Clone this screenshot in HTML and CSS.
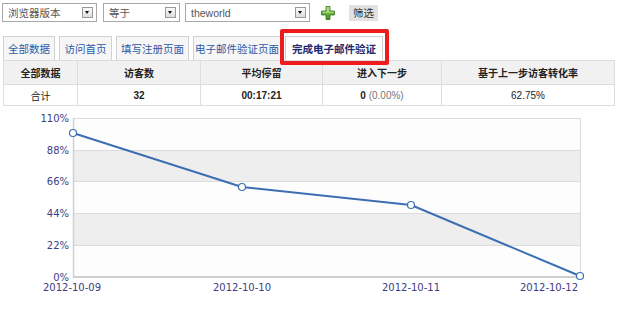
FILE: index.html
```html
<!DOCTYPE html>
<html lang="zh">
<head>
<meta charset="utf-8">
<link rel="stylesheet" href="styles.css">
</head>
<body>
<div class="page">
  <div class="filter">
    <div class="sel sel1"><span>浏览器版本</span><span class="arrow"></span></div>
    <div class="sel sel2"><span>等于</span><span class="arrow"></span></div>
    <div class="sel sel3"><span class="latin">theworld</span><span class="arrow"></span></div>
    <svg class="plus" width="14" height="14" viewBox="0 0 14 14">
      <defs>
        <linearGradient id="pg" x1="0" y1="0" x2="0" y2="1">
          <stop offset="0" stop-color="#9ad36a"/>
          <stop offset="1" stop-color="#3f8f1f"/>
        </linearGradient>
      </defs>
      <path d="M5 0.5h4v4.5h4.5v4h-4.5v4.5h-4v-4.5h-4.5v-4h4.5z" fill="url(#pg)" stroke="#3b7a1c" stroke-width="0.8"/>
      <path d="M5.8 1.4h2.4v4.4h4.4v1.2h-10.7v-1.2h3.9z" fill="#c6ec9e" opacity="0.6"/>
    </svg>
    <div class="btn">筛选</div>
  </div>

  <div class="tabs">
    <div class="tab t1">全部数据</div>
    <div class="tab t2">访问首页</div>
    <div class="tab t3">填写注册页面</div>
    <div class="tab t4">电子邮件验证页面</div>
    <div class="tab t5 active">完成电子邮件验证<span class="mark"></span></div>
  </div>

  <table class="data">
    <tr class="head">
      <th class="c1">全部数据</th>
      <th class="c2">访客数</th>
      <th class="c3">平均停留</th>
      <th class="c4">进入下一步</th>
      <th class="c5">基于上一步访客转化率</th>
    </tr>
    <tr class="row">
      <td>合计</td>
      <td class="num b">32</td>
      <td class="num b">00:17:21</td>
      <td class="num"><b>0</b> <span class="muted">(0.00%)</span></td>
      <td class="num">62.75%</td>
    </tr>
  </table>

  <svg class="chart" width="620" height="205" viewBox="0 107 620 205">
    <rect x="73" y="118" width="507" height="159" fill="#fdfdfd"/>
    <rect x="73" y="150" width="507" height="31" fill="#eeeeee"/>
    <rect x="73" y="213" width="507" height="32" fill="#eeeeee"/>
    <g stroke="#dcdcdc" stroke-width="1">
      <line x1="73" y1="118.5" x2="580" y2="118.5"/>
      <line x1="73" y1="150.5" x2="580" y2="150.5"/>
      <line x1="73" y1="181.5" x2="580" y2="181.5"/>
      <line x1="73" y1="213.5" x2="580" y2="213.5"/>
      <line x1="73" y1="245.5" x2="580" y2="245.5"/>
      <line x1="580.5" y1="118" x2="580.5" y2="277"/>
    </g>
    <line x1="73" y1="277" x2="581" y2="277" stroke="#d0d0d0" stroke-width="2"/>
    <line x1="73.5" y1="118" x2="73.5" y2="278" stroke="#d0d0d0" stroke-width="1.5"/>
    <g class="ylab" text-anchor="end">
      <text x="69" y="122">110%</text>
      <text x="69" y="154">88%</text>
      <text x="69" y="185">66%</text>
      <text x="69" y="217">44%</text>
      <text x="69" y="249">22%</text>
      <text x="69" y="281">0%</text>
    </g>
    <g class="ylab" text-anchor="middle">
      <text x="72" y="291">2012-10-09</text>
      <text x="242" y="291">2012-10-10</text>
      <text x="411" y="291">2012-10-11</text>
      <text x="549" y="291">2012-10-12</text>
    </g>
    <polyline points="73,133 242,187 411,205 580,276" fill="none" stroke="#3d6eb2" stroke-width="2" stroke-linejoin="round"/>
    <g fill="#ffffff" stroke="#3d6eb2" stroke-width="1.2">
      <circle cx="73" cy="133" r="3.5"/>
      <circle cx="242" cy="187" r="3.5"/>
      <circle cx="411" cy="205" r="3.5"/>
      <circle cx="580" cy="276" r="3.5"/>
    </g>
  </svg>
</div>
</body>
</html>
```

FILE: styles.css
```css
html, body {
  margin: 0;
  padding: 0;
  background: #ffffff;
}

.page {
  width: 620px;
  height: 312px;
  overflow: hidden;
  font-family: "Liberation Sans", "Noto Sans CJK SC", sans-serif;
  color: #333333;
}

.filter {
  display: flex;
  align-items: center;
  padding: 3px 0 0 2px;
  height: 19px;
}

.sel {
  box-sizing: border-box;
  height: 19px;
  border: 1px solid #a8a8a8;
  display: flex;
  align-items: center;
  justify-content: space-between;
  padding: 0 3px 0 5px;
  font-size: 10.5px;
  color: #555555;
  font-family: "Noto Sans CJK SC", sans-serif;
  margin-right: 6px;
}

.sel .latin {
  font-family: "Liberation Sans", sans-serif;
  font-size: 10.5px;
}

.sel1 { width: 95px; }
.sel2 { width: 77px; margin-right: 5px; }
.sel3 { width: 125px; margin-right: 11px; }

.arrow {
  box-sizing: border-box;
  width: 11px;
  height: 11px;
  border: 1px solid #9a9a9a;
  background: linear-gradient(#fafafa, #dedede);
  position: relative;
}

.arrow::after {
  content: "";
  position: absolute;
  left: 2px;
  top: 3px;
  border-left: 2.5px solid transparent;
  border-right: 2.5px solid transparent;
  border-top: 3px solid #111111;
}

.plus {
  display: block;
  margin-right: 14px;
}

.btn {
  box-sizing: border-box;
  height: 16px;
  width: 29px;
  background: #e2e2e2;
  display: flex;
  align-items: center;
  justify-content: center;
  font-family: "Noto Sans CJK SC", sans-serif;
  font-size: 10.5px;
  color: #333333;
}

.tabs {
  display: flex;
  gap: 4px;
  margin: 14px 0 0 3px;
  height: 24px;
}

.tab {
  box-sizing: border-box;
  height: 24px;
  border: 1px solid #d2d2d2;
  border-bottom: none;
  background: #f6f6f6;
  color: #2a5aa6;
  font-family: "Noto Sans CJK SC", sans-serif;
  font-size: 10.5px;
  display: flex;
  align-items: center;
  justify-content: center;
  position: relative;
}

.t1 { width: 52px; }
.t2 { width: 53px; }
.t3 { width: 73px; }
.t4 { width: 88px; }
.t5 { width: 98px; }

.tab.active {
  background: #ffffff;
  color: #1b2a6e;
  font-weight: bold;
}

.mark {
  position: absolute;
  left: -6px;
  top: -8px;
  right: -7px;
  bottom: -5px;
  border: 4px solid #ee1c1c;
  border-radius: 2px;
}

.data {
  margin-left: 3px;
  width: 612px;
  border-collapse: collapse;
  font-family: "Liberation Sans", "Noto Sans CJK SC", sans-serif;
  font-size: 10px;
  color: #222222;
}

.data th, .data td {
  border: 1px solid #dddddd;
  text-align: center;
  padding: 0;
}

.data .head th {
  height: 23px;
  background: #f1f1f1;
  font-weight: bold;
  font-family: "Noto Sans CJK SC", sans-serif;
}

.data .row td {
  height: 20px;
  background: #ffffff;
}

.data .row td:first-child {
  font-family: "Noto Sans CJK SC", sans-serif;
}

.c1 { width: 73px; }
.c2 { width: 122px; }
.c3 { width: 121px; }
.c4 { width: 118px; }

.b { font-weight: bold; }

.muted {
  color: #777777;
}

.chart {
  display: block;
  margin-top: 1px;
}

.ylab text {
  font-family: "DejaVu Sans", sans-serif;
  font-size: 10px;
  fill: #3d3d85;
}
```
